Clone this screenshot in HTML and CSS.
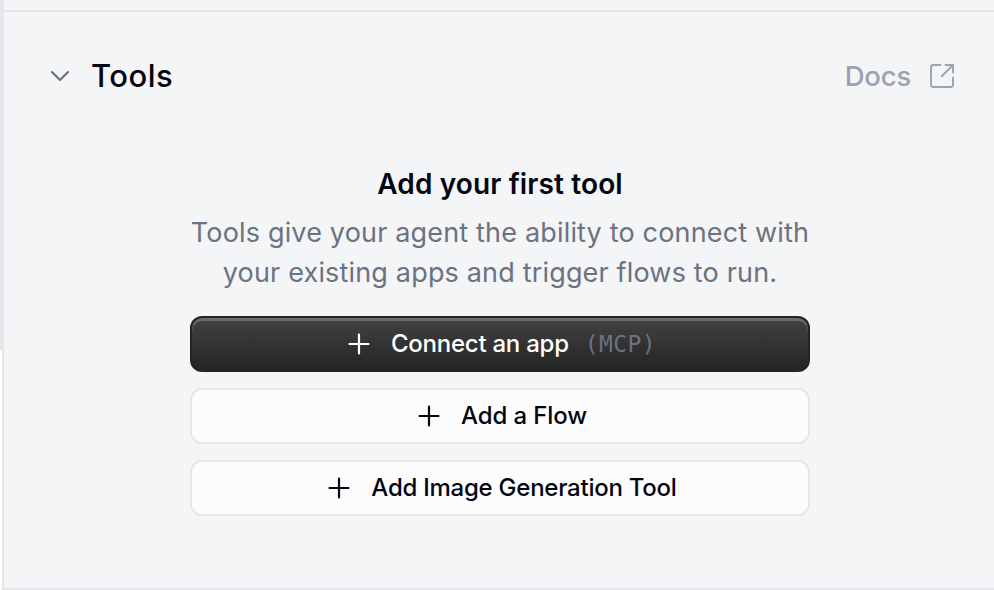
FILE: index.html
```
<!DOCTYPE html>
<html lang="en">
<head>
    <meta charset="UTF-8">
    <meta name="viewport" content="width=device-width, initial-scale=1.0">
    <title>Tools</title>
    <link rel="stylesheet" href="styles.css">
</head>
<body>
    <div class="page">
        <div class="rail"><div class="rail-thumb"></div></div>
        <div class="panel">
            <div class="panel-top"></div>
            <div class="tools">
                <div class="tools-header">
                    <svg class="chevron" viewBox="0 0 20 12" fill="none" stroke="currentColor" stroke-width="2.200" stroke-linecap="round" stroke-linejoin="round"><path d="M2 2l8 8 8-8"/></svg>
                    <h2>Tools</h2>
                    <a class="docs" href="#">
                        <span>Docs</span>
                        <svg viewBox="0 0 26 26" fill="none" stroke="currentColor" stroke-width="1.900" stroke-linecap="round" stroke-linejoin="round"><path d="M11.500 2H4.500A2.500 2.500 0 0 0 2 4.500V21.500A2.500 2.500 0 0 0 4.500 24h17A2.500 2.500 0 0 0 24 21.500V14.500"/><path d="M16.500 2H24v7.500M24 2L13 13"/></svg>
                    </a>
                </div>
                <div class="empty">
                    <h3>Add your first tool</h3>
                    <p>Tools give your agent the ability to connect with<br>your existing apps and trigger flows to run.</p>
                    <button class="btn btn-dark">
                        <svg class="plus" viewBox="0 0 24 24" fill="none" stroke="currentColor" stroke-width="2.200" stroke-linecap="round"><path d="M12 2.500v19M2.500 12h19"/></svg>
                        <span>Connect an app</span>
                        <span class="mcp">(MCP)</span>
                    </button>
                    <button class="btn">
                        <svg class="plus" viewBox="0 0 24 24" fill="none" stroke="currentColor" stroke-width="2.200" stroke-linecap="round"><path d="M12 2.500v19M2.500 12h19"/></svg>
                        <span class="label-flow">Add a Flow</span>
                    </button>
                    <button class="btn">
                        <svg class="plus" viewBox="0 0 24 24" fill="none" stroke="currentColor" stroke-width="2.200" stroke-linecap="round"><path d="M12 2.500v19M2.500 12h19"/></svg>
                        <span>Add Image Generation Tool</span>
                    </button>
                </div>
            </div>
        </div>
    </div>
</body>
</html>
```
FILE: styles.css
```
* {
    box-sizing: border-box;
}
body {
    margin: 0;
    font-family: Inter, sans-serif;
    background: #ffffff;
    color: #030712;
}
.page {
    display: flex;
    height: 590px;
    overflow: hidden;
}
.rail {
    width: 2px;
}
.rail-thumb {
    height: 350px;
    background: #e5e7eb;
}
.panel {
    flex: 1;
    background: #f4f5f7;
    border-left: 2px solid #e5e7eb;
    border-bottom: 2px solid #e5e7eb;
}
.panel-top {
    height: 12px;
    border-bottom: 2px solid #e5e7eb;
}
.tools-header {
    display: flex;
    align-items: center;
    height: 128px;
    padding: 0 39px 0 46px;
}
.chevron {
    width: 20px;
    height: 12px;
    color: #6b7280;
}
h2, h3, p {
    margin: 0;
}
h2 {
    margin-left: 21px;
    font-size: 31px;
    font-weight: 500;
    line-height: 40px;
    letter-spacing: 0.5px;
}
.docs {
    display: flex;
    align-items: center;
    gap: 18px;
    margin-left: auto;
    color: #9ca3af;
    font-size: 27.5px;
    font-weight: 500;
    text-decoration: none;
}
.docs span {
    letter-spacing: -0.2px;
}
.docs svg {
    width: 26px;
    height: 26px;
}
.empty {
    display: flex;
    flex-direction: column;
    align-items: center;
    width: 620px;
    margin: 24px 0 0 186px;
    text-align: center;
    white-space: nowrap;
}
h3 {
    font-size: 28px;
    font-weight: 600;
    line-height: 40px;
    letter-spacing: 0.13px;
}
p {
    margin: 9px 0 23px;
    color: #6b7280;
    font-size: 27px;
    line-height: 40px;
    letter-spacing: 0.17px;
}
.btn {
    display: flex;
    align-items: center;
    justify-content: center;
    gap: 20px;
    width: 620px;
    height: 56px;
    margin: 0 0 16px;
    padding: 0 0 1px 4px;
    border: 2px solid #e5e7eb;
    border-radius: 12px;
    background: #fcfcfc;
    color: #030712;
    font-family: inherit;
    font-size: 24px;
    font-weight: 500;
    letter-spacing: -0.25px;
}
.btn-dark {
    padding-left: 3px;
    border-color: #242424;
    background: linear-gradient(#424242, #242424);
    box-shadow: inset 0 3px 0 #6a6a6a;
    color: #ffffff;
}
.plus {
    width: 24px;
    height: 24px;
    margin-top: 1px;
}
.label-flow {
    letter-spacing: -0.1px;
}
.mcp {
    margin-left: -4px;
    color: #6b7280;
    font-family: "DejaVu Sans Mono", monospace;
    font-size: 23px;
    font-weight: 400;
    letter-spacing: 0.4px;
}
```
